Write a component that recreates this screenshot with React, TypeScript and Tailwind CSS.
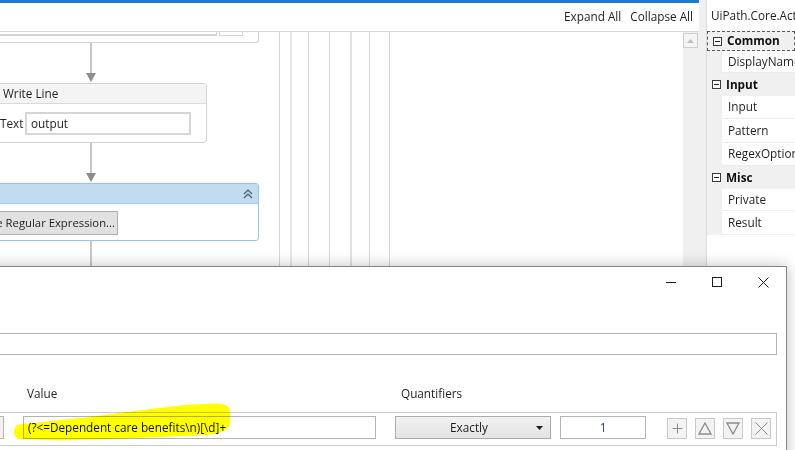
import React from "react";

function Connector({ tall }: { tall?: boolean }) {
  return (
    <div className="flex flex-col shrink-0">
      <div className={tall ? "ml-[90px] w-[2px] h-[40px] bg-[#c8c8c8]" : "ml-[90px] w-[2px] h-[30px] bg-[#c8c8c8]"} />
      {!tall && (
        <svg className="ml-[86px]" width="10" height="9" viewBox="0 0 10 9">
          <polygon points="0,0 10,0 5,9" fill="#8c8c8c" />
        </svg>
      )}
    </div>
  );
}

function MinusBox() {
  return (
    <div className="w-[9px] h-[9px] border border-[#3a3a3a] flex items-center justify-center bg-white">
      <div className="w-[5px] h-px bg-[#1e1e1e]" />
    </div>
  );
}

function Category({ label, h, focus }: { label: string; h: string; focus?: boolean }) {
  return (
    <div
      className={
        (focus ? "border border-dashed border-[#5a5a5a] " : "") +
        h +
        " flex items-center bg-[#f0f0f0] shrink-0"
      }
    >
      <div className="w-[15px] shrink-0 flex items-center justify-center pl-[3px]">
        <MinusBox />
      </div>
      <span className="pl-[4px] font-bold text-[#111]">{label}</span>
    </div>
  );
}

function Prop({ label, h }: { label: string; h: string }) {
  return (
    <div className={h + " flex shrink-0"}>
      <div className="w-[15px] shrink-0 bg-[#f0f0f0]" />
      <div className="flex-1 min-w-0 flex items-center pl-[6px] bg-white border-b border-[#ececec] whitespace-nowrap">
        {label}
      </div>
    </div>
  );
}

export default function App() {
  return (
    <div className="relative w-[795px] h-[450px] overflow-hidden bg-white flex font-['Open_Sans','Noto_Sans',sans-serif] text-[11.75px] text-[#1e1e1e] leading-none">
      {/* Designer */}
      <div className="w-[699px] h-full flex flex-col shrink-0">
        <div className="h-[3px] bg-[#1f78d1] shrink-0" />
        <div className="h-[29px] shrink-0 border-b border-[#dadada] flex items-center justify-end pr-[6px] gap-[9px]">
          <span>Expand All</span>
          <span>Collapse All</span>
        </div>
        <div className="flex-1 flex min-h-0">
          <div className="flex-1 flex">
            {/* diagram column */}
            <div className="w-[279px] shrink-0 flex flex-col">
              {/* top box (scrolled off) */}
              <div className="ml-[-20px] w-[279px] h-[11px] border-x border-b border-[#d3d3d3] rounded-b-[3px] flex items-start shrink-0">
                <div className="w-[236px] h-[4px] border-b-2 border-r border-[#d4d4d4]" />
                <div className="ml-[2px] w-[24px] h-[4px] border-x border-b border-[#d4d4d4]" />
              </div>
              <Connector />
              {/* Write Line */}
              <div className="mt-[1px] ml-[-20px] w-[227px] border border-[#d3d3d3] rounded-[3px] flex flex-col shrink-0">
                <div className="h-[20px] bg-[#f3f4f3] border-b border-[#d9d9d9] flex items-center pl-[22px]">
                  Write Line
                </div>
                <div className="pt-[8px] pb-[7px] pl-[19px] flex items-center">
                  <span className="w-[25px]">Text</span>
                  <div className="w-[166px] h-[23px] border-2 border-[#d6d6d6] flex items-center pl-[4px]">
                    output
                  </div>
                </div>
              </div>
              <Connector />
              {/* Matches */}
              <div className="mt-[1px] ml-[-20px] w-[279px] border border-[#94c4e8] rounded-[3px] flex flex-col shrink-0">
                <div className="h-[20px] bg-[#c2dcef] border-b border-[#a8cfeb] flex items-center justify-end pr-[5px]">
                  <svg width="10" height="10" viewBox="0 0 10 10">
                    <polyline points="1,5 5,1 9,5" fill="none" stroke="#4b5866" strokeWidth="1.2" />
                    <polyline points="1,9 5,5 9,9" fill="none" stroke="#4b5866" strokeWidth="1.2" />
                  </svg>
                </div>
                <div className="pt-[7px] pb-[5px] flex">
                  <div className="w-[137px] h-[24px] bg-[#e1e1e1] border border-[#adadad] flex items-center justify-end pr-[2px] overflow-hidden whitespace-nowrap text-[11.3px]">
                    Configure Regular Expression...
                  </div>
                </div>
              </div>
              <Connector tall />
            </div>
            {/* lanes */}
            <div className="w-px h-full bg-[#d6d6d6] shrink-0" />
            <div className="w-[10px] shrink-0" />
            <div className="w-[2px] h-full bg-[#e6e6e6] shrink-0" />
            <div className="w-[16px] shrink-0" />
            <div className="w-px h-full bg-[#d6d6d6] shrink-0" />
            <div className="w-[20px] shrink-0" />
            <div className="w-px h-full bg-[#d6d6d6] shrink-0" />
            <div className="w-[20px] shrink-0" />
            <div className="w-[2px] h-full bg-[#e2e2e2] shrink-0" />
            <div className="w-[17px] shrink-0" />
            <div className="w-px h-full bg-[#d6d6d6] shrink-0" />
            <div className="w-[19px] shrink-0" />
            <div className="w-px h-full bg-[#d6d6d6] shrink-0" />
          </div>
          {/* scrollbar */}
          <div className="w-[16px] bg-[#f0f0f0] shrink-0 flex flex-col pt-[1px]">
            <div className="w-[15px] h-[15px] border border-[#cdcdcd] bg-[#f4f4f4] flex items-center justify-center">
              <svg width="7" height="4" viewBox="0 0 7 4">
                <polygon points="0,4 7,4 3.5,0" fill="#bdbdbd" />
              </svg>
            </div>
          </div>
        </div>
      </div>

      {/* splitter */}
      <div className="w-[8px] shrink-0 bg-[#f0f0f0] border-r border-[#dadada]" />

      {/* Properties */}
      <div className="flex-1 flex flex-col min-w-0 bg-white whitespace-nowrap">
        <div className="h-[31px] shrink-0 flex items-center pl-[4px]">UiPath.Core.Activities.Matches</div>
        <Category label="Common" h="h-[20px]" focus />
        <Prop label="DisplayName" h="h-[22px]" />
        <Category label="Input" h="h-[23px]" />
        <Prop label="Input" h="h-[23px]" />
        <Prop label="Pattern" h="h-[24px]" />
        <Prop label="RegexOption" h="h-[23px]" />
        <Category label="Misc" h="h-[23px]" />
        <Prop label="Private" h="h-[22px]" />
        <Prop label="Result" h="h-[24px]" />
      </div>

      {/* Dialog window */}
      <div className="absolute left-[-30px] top-[266px] w-[817px] h-[220px] bg-white border border-[#858585] shadow-[0_0_14px_rgba(0,0,0,0.25)] flex flex-col">
        <div className="h-[30px] shrink-0 flex justify-end">
          <div className="w-[46px] flex items-center justify-center">
            <div className="w-[10px] h-px bg-[#1e1e1e]" />
          </div>
          <div className="w-[46px] flex items-center justify-center">
            <div className="w-[10px] h-[10px] border border-[#1e1e1e]" />
          </div>
          <div className="w-[46px] flex items-center justify-center">
            <svg width="11" height="11" viewBox="0 0 11 11">
              <path d="M0.5 0.5 L10.5 10.5 M10.5 0.5 L0.5 10.5" stroke="#1e1e1e" strokeWidth="1" />
            </svg>
          </div>
        </div>
        <div className="mt-[36px] h-[22px] mr-[9px] border border-[#b4b4b4] shrink-0" />
        <div className="mt-[31px] h-[16px] flex items-center shrink-0">
          <div className="w-[430px] pl-[56px]">Value</div>
          <div>Quantifiers</div>
        </div>
        <div className="mt-[10px] h-[34px] mr-[9px] border border-[#cacaca] flex items-start pt-[3px] shrink-0">
          <div className="w-[32px] h-[23px] border border-[#b4b4b4] bg-[#f2f2f2]" />
          <div className="ml-[19px] w-[353px] h-[23px] border border-[#b4b4b4] flex items-center pl-[4px] whitespace-nowrap text-[#111]">
            {"(?<=Dependent care benefits\\n)[\\d]+"}
          </div>
          <div className="ml-[19px] w-[156px] h-[23px] border border-[#acacac] bg-gradient-to-b from-[#f2f2f2] to-[#e3e3e3] flex items-center">
            <span className="flex-1 text-center pl-[6px]">Exactly</span>
            <svg className="mr-[5px]" width="7" height="4" viewBox="0 0 7 4">
              <polygon points="0,0 7,0 3.5,4" fill="#1e1e1e" />
            </svg>
            <div className="w-[2px]" />
          </div>
          <div className="ml-[9px] w-[86px] h-[23px] border border-[#b4b4b4] flex items-center justify-center text-[#1d3a66]">
            1
          </div>
          <div className="ml-[21px] mt-[2px] w-[20px] h-[21px] border border-[#c8c8c8] bg-[#f3f3f3] flex items-center justify-center">
            <svg width="11" height="11" viewBox="0 0 11 11">
              <path d="M5.5 0.5 V10.5 M0.5 5.5 H10.5" stroke="#8c8c8c" strokeWidth="1" />
            </svg>
          </div>
          <div className="ml-[8px] mt-[2px] w-[20px] h-[21px] border border-[#c8c8c8] bg-[#f3f3f3] flex items-center justify-center">
            <svg width="14" height="13" viewBox="0 0 14 13">
              <polygon points="7,1 13,12 1,12" fill="none" stroke="#8c8c8c" strokeWidth="1.3" />
            </svg>
          </div>
          <div className="ml-[8px] mt-[2px] w-[20px] h-[21px] border border-[#c8c8c8] bg-[#f3f3f3] flex items-center justify-center">
            <svg width="14" height="13" viewBox="0 0 14 13">
              <polygon points="1,1 13,1 7,12" fill="none" stroke="#8c8c8c" strokeWidth="1.3" />
            </svg>
          </div>
          <div className="ml-[8px] mt-[2px] w-[20px] h-[21px] border border-[#c8c8c8] bg-[#f3f3f3] flex items-center justify-center">
            <svg width="13" height="13" viewBox="0 0 13 13">
              <path d="M0.5 0.5 L12.5 12.5 M12.5 0.5 L0.5 12.5" stroke="#8c8c8c" strokeWidth="1" />
            </svg>
          </div>
        </div>
      </div>

      {/* highlighter mark */}
      <svg
        className="absolute left-0 top-[400px] pointer-events-none mix-blend-multiply"
        width="240"
        height="50"
        viewBox="0 0 240 50"
      >
        <path
          d="M16 26 C13 30 13 36 18 39 L60 40.5 L110 39 L160 37 L205 35 C222 34 230 30 230 22 L230 10 C229 5 222 3 212 3.5 L185 5 L150 9 L120 13 L90 17 L60 20 L35 23 C24 24 18 24 16 26 Z"
          fill="#ffff00"
        />
      </svg>
    </div>
  );
}
